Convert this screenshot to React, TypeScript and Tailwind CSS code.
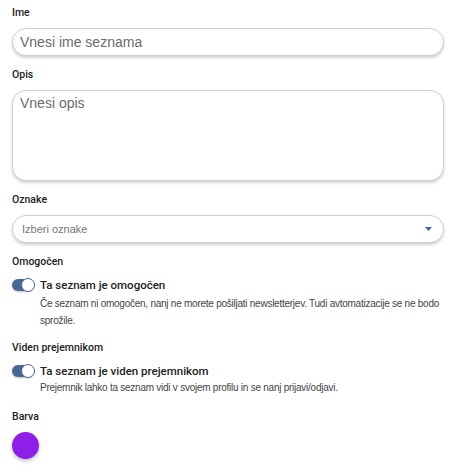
import React, { useState } from 'react';

const Toggle = ({ on, onChange }: { on: boolean; onChange: () => void }) => (
  <button
    type="button"
    onClick={onChange}
    className={`relative flex h-[12px] w-[22px] shrink-0 items-center rounded-full shadow-[0_1px_2px_rgba(0,0,0,0.25)] ${on ? 'bg-[#4a6596]' : 'bg-[#bdbdbd]'}`}
  >
    <span
      className={`absolute h-[14px] w-[14px] rounded-full border border-[#4a6596] bg-white ${on ? 'right-[-1px]' : 'left-[-1px]'}`}
    />
  </button>
);

const Label = ({ children }: { children: React.ReactNode }) => (
  <div className="mb-[8px] font-['Roboto',sans-serif] text-[10.5px] font-medium leading-[14px] text-[#222]">{children}</div>
);

export default function App() {
  const [enabled, setEnabled] = useState(true);
  const [visible, setVisible] = useState(true);

  return (
    <div className="min-h-[472px] w-[461px] bg-white px-[12px] pt-[6px] font-['Liberation_Sans',Arial,sans-serif] text-[#333]">
      <div>
        <Label>Ime</Label>
        <input
          type="text"
          placeholder="Vnesi ime seznama"
          className="h-[28px] w-[432px] rounded-full border border-[#cfcfcf] bg-white px-[7px] text-[14px] text-[#333] shadow-[0_2px_3px_rgba(0,0,0,0.18)] outline-none placeholder:text-[#6b6b6b]"
        />
      </div>

      <div className="mt-[12px]">
        <Label>Opis</Label>
        <textarea
          placeholder="Vnesi opis"
          className="block h-[91px] w-[432px] resize-none rounded-[14px] border border-[#cfcfcf] bg-white px-[7px] py-[4px] text-[14px] leading-[17px] text-[#333] shadow-[0_2px_3px_rgba(0,0,0,0.18)] outline-none placeholder:text-[#6b6b6b]"
        />
      </div>

      <div className="mt-[12px]">
        <Label>Oznake</Label>
        <div className="flex h-[28px] w-[432px] items-center justify-between rounded-full border border-[#cfcfcf] bg-white pl-[9px] pr-[11px] shadow-[0_2px_3px_rgba(0,0,0,0.18)]">
          <span className="text-[11px] text-[#757575]">Izberi oznake</span>
          <svg width="7" height="4" viewBox="0 0 7 4">
            <path d="M0 0h7L3.5 4z" fill="#4a6596" />
          </svg>
        </div>
      </div>

      <div className="mt-[12px]">
        <Label>Omogočen</Label>
        <div className="flex items-center gap-[6px]">
          <Toggle on={enabled} onChange={() => setEnabled(!enabled)} />
          <span className="font-['Roboto',sans-serif] text-[11.5px] font-medium leading-[16px] text-[#222]">Ta seznam je omogočen</span>
        </div>
        <p className="mt-[2px] pl-[28px] text-[10px] leading-[17px] tracking-[-0.25px] text-[#444]">
          Če seznam ni omogočen, nanj ne morete pošiljati newsletterjev. Tudi avtomatizacije se ne bodo sprožile.
        </p>
      </div>

      <div className="mt-[12px]">
        <Label>Viden prejemnikom</Label>
        <div className="flex items-center gap-[6px]">
          <Toggle on={visible} onChange={() => setVisible(!visible)} />
          <span className="font-['Roboto',sans-serif] text-[11.5px] font-medium leading-[16px] text-[#222]">Ta seznam je viden prejemnikom</span>
        </div>
        <p className="pl-[28px] text-[10px] leading-[17px] tracking-[-0.25px] text-[#444]">
          Prejemnik lahko ta seznam vidi v svojem profilu in se nanj prijavi/odjavi.
        </p>
      </div>

      <div className="mt-[14px]">
        <Label>Barva</Label>
        <button type="button" className="block h-[27px] w-[27px] rounded-full bg-[#8e1fe6] shadow-[0_2px_4px_rgba(0,0,0,0.25)]" />
      </div>
    </div>
  );
}
